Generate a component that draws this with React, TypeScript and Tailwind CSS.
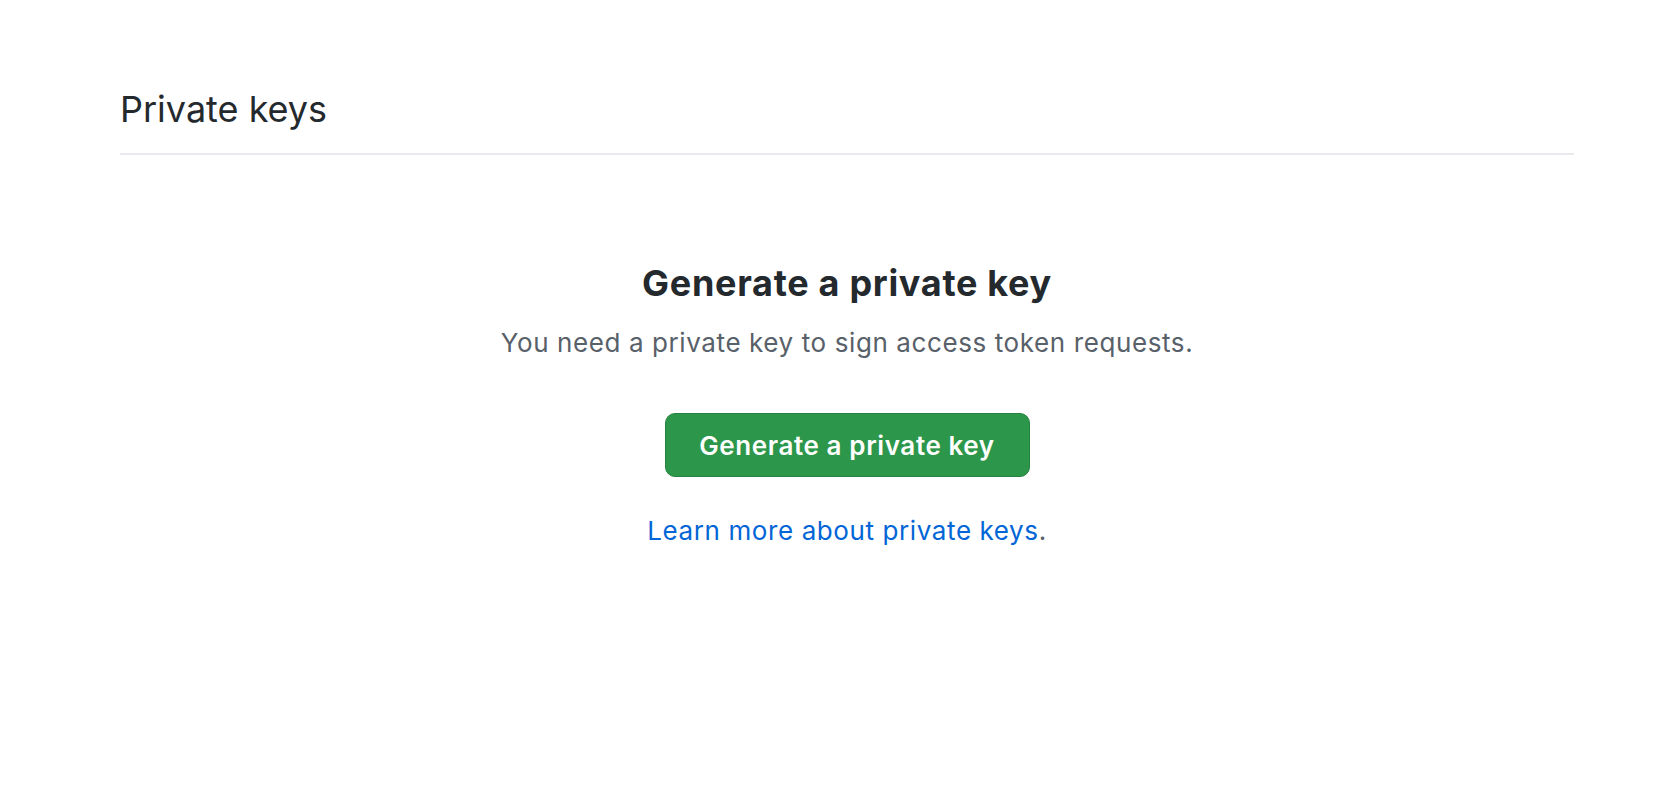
export default function App() {
  return (
    <div
      className="min-h-[796px] w-full bg-white pl-[120px] pr-[104px]"
      style={{ fontFamily: 'Inter, "Liberation Sans", sans-serif' }}
    >
      <div className="pt-[82px]">
        <h2 className="border-b-2 border-[#e8eaed] pb-[17px] text-[36px] font-normal leading-[54px] text-[#24292e]">
          Private keys
        </h2>
      </div>
      <div className="flex flex-col items-center pt-[104px]">
        <h3 className="text-[36px] font-bold leading-[48px] tracking-[0.7px] text-[#24292e]">
          Generate a private key
        </h3>
        <p className="mt-[18px] text-[26px] leading-[36px] tracking-[0.6px] text-[#586069]">
          You need a private key to sign access token requests.
        </p>
        <button className="mt-[52px] flex h-[64px] w-[365px] items-center justify-center rounded-[10px] border border-[#24843f] bg-[#2c974b] text-[26px] font-semibold tracking-[0.6px] text-white">
          Generate a private key
        </button>
        <p className="mt-[36px] text-[26px] leading-[36px] tracking-[0.6px] text-[#586069]">
          <a href="#" className="text-[#0366d6]">
            Learn more about private keys
          </a>
          .
        </p>
      </div>
    </div>
  );
}
